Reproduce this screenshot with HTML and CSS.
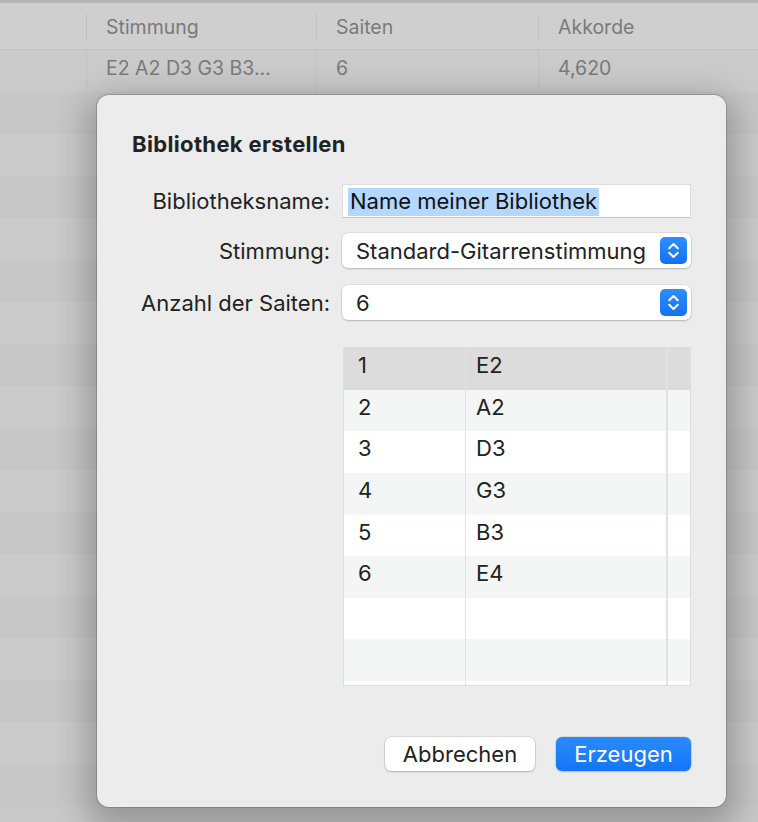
FILE: index.html
```html
<!DOCTYPE html>
<html lang="de">
<head>
<meta charset="utf-8">
<title>Bibliothek erstellen</title>
<link rel="stylesheet" href="styles.css">
</head>
<body>
<div class="window">
  <div class="list">
    <div class="list-head">
      <div class="cell c0"></div>
      <div class="cell c1">Stimmung</div>
      <div class="cell c2">Saiten</div>
      <div class="cell c3">Akkorde</div>
    </div>
    <div class="list-row">
      <div class="cell c0"></div>
      <div class="cell c1">E2 A2 D3 G3 B3...</div>
      <div class="cell c2">6</div>
      <div class="cell c3">4,620</div>
    </div>
    <div class="list-row"></div>
    <div class="list-row"></div>
    <div class="list-row"></div>
    <div class="list-row"></div>
    <div class="list-row"></div>
    <div class="list-row"></div>
    <div class="list-row"></div>
    <div class="list-row"></div>
    <div class="list-row"></div>
    <div class="list-row"></div>
    <div class="list-row"></div>
    <div class="list-row"></div>
    <div class="list-row"></div>
    <div class="list-row"></div>
    <div class="list-row"></div>
    <div class="list-row"></div>
    <div class="list-row"></div>
  </div>

  <div class="dialog">
    <h1 class="title">Bibliothek erstellen</h1>

    <div class="form-row row-name">
      <label class="label">Bibliotheksname:</label>
      <div class="field"><span class="selected">Name meiner Bibliothek</span></div>
    </div>

    <div class="form-row row-tuning">
      <label class="label">Stimmung:</label>
      <div class="popup">
        <span class="popup-text">Standard-Gitarrenstimmung</span>
        <span class="stepper">
          <svg width="27" height="27" viewBox="0 0 27 27" aria-hidden="true">
            <path d="M9.2 11.2 L13.5 7 L17.8 11.2" fill="none" stroke="#fff" stroke-width="2" stroke-linecap="round" stroke-linejoin="round"/>
            <path d="M9.2 15.8 L13.5 20 L17.8 15.8" fill="none" stroke="#fff" stroke-width="2" stroke-linecap="round" stroke-linejoin="round"/>
          </svg>
        </span>
      </div>
    </div>

    <div class="form-row row-strings">
      <label class="label">Anzahl der Saiten:</label>
      <div class="popup">
        <span class="popup-text">6</span>
        <span class="stepper">
          <svg width="27" height="27" viewBox="0 0 27 27" aria-hidden="true">
            <path d="M9.2 11.2 L13.5 7 L17.8 11.2" fill="none" stroke="#fff" stroke-width="2" stroke-linecap="round" stroke-linejoin="round"/>
            <path d="M9.2 15.8 L13.5 20 L17.8 15.8" fill="none" stroke="#fff" stroke-width="2" stroke-linecap="round" stroke-linejoin="round"/>
          </svg>
        </span>
      </div>
    </div>

    <div class="form-row row-table">
      <div class="label"></div>
      <div class="table">
        <div class="t-row sel"><div class="t-cell n">1</div><div class="t-cell note">E2</div><div class="t-cell extra"></div></div>
        <div class="t-row alt"><div class="t-cell n">2</div><div class="t-cell note">A2</div><div class="t-cell extra"></div></div>
        <div class="t-row"><div class="t-cell n">3</div><div class="t-cell note">D3</div><div class="t-cell extra"></div></div>
        <div class="t-row alt"><div class="t-cell n">4</div><div class="t-cell note">G3</div><div class="t-cell extra"></div></div>
        <div class="t-row"><div class="t-cell n">5</div><div class="t-cell note">B3</div><div class="t-cell extra"></div></div>
        <div class="t-row alt"><div class="t-cell n">6</div><div class="t-cell note">E4</div><div class="t-cell extra"></div></div>
        <div class="t-row"><div class="t-cell n"></div><div class="t-cell note"></div><div class="t-cell extra"></div></div>
        <div class="t-row alt"><div class="t-cell n"></div><div class="t-cell note"></div><div class="t-cell extra"></div></div>
        <div class="t-row tail"><div class="t-cell n"></div><div class="t-cell note"></div><div class="t-cell extra"></div></div>
      </div>
    </div>

    <div class="buttons">
      <button class="btn btn-cancel" type="button">Abbrechen</button>
      <button class="btn btn-default" type="button">Erzeugen</button>
    </div>
  </div>
</div>
</body>
</html>
```

FILE: styles.css
```css
* { box-sizing: border-box; }

html, body {
  margin: 0;
  padding: 0;
}

body {
  font-family: Inter, "Noto Sans", "DejaVu Sans", sans-serif;
  color: #222;
  background: #c9c9c9;
}

.window {
  position: relative;
  width: 758px;
  height: 822px;
  overflow: hidden;
  background: #c9c9c9;
  border-top: 3px solid #b4b4b4;
}

/* background list */
.list-head,
.list-row {
  display: grid;
  grid-template-columns: 86px 230px 222px 1fr;
  height: 42px;
}

.list-head {
  height: 47px;
  background: #cfcfcf;
  border-bottom: 1px solid #c2c2c2;
}

.list-row { background: #cbcbcb; }
.list-row:nth-child(odd) { background: #c7c7c7; }

.cell {
  font-size: 19.5px;
  color: #7a7a7a;
  padding-left: 19px;
  display: flex;
  align-items: center;
}

.list-head .cell { padding-top: 2px; }

.list-head .c1,
.list-head .c2,
.list-head .c3 {
  border-left: 1px solid #c2c2c2;
  margin: 10px 0 8px;
  padding-top: 0;
}

.list-row .c1,
.list-row .c2,
.list-row .c3 {
  border-left: 1px solid #c2c2c2;
  padding-bottom: 6px;
}

/* dialog sheet */
.dialog {
  position: absolute;
  left: 97px;
  top: 92px;
  width: 629px;
  height: 712px;
  background: #ececec;
  border-radius: 12px;
  padding: 36px 35px 35px;
  box-shadow:
    0 0 0 1px rgba(0, 0, 0, 0.16),
    0 12px 34px 10px rgba(0, 0, 0, 0.26);
}

.title {
  margin: 0 0 27px;
  font-size: 22px;
  line-height: 26px;
  font-weight: 700;
  letter-spacing: 0.35px;
  color: #222;
}

.form-row {
  display: flex;
  align-items: center;
  gap: 12px;
}

.label {
  width: 198px;
  flex: none;
  text-align: right;
  font-size: 22px;
  color: #222;
}

.row-name { height: 34px; }
.row-tuning { height: 35px; margin-top: 15px; }
.row-strings { height: 35px; margin-top: 17px; }
.row-table { margin-top: 27px; align-items: flex-start; }

.field {
  width: 349px;
  height: 34px;
  background: #fff;
  border: 1px solid #dcdcdc;
  border-bottom-color: #c6c6c6;
  padding: 1px 0 0 5px;
  display: flex;
  align-items: center;
  font-size: 22px;
}

.selected {
  background: #b3d7ff;
  color: #111;
  padding: 1px 2px 2px;
  line-height: 25px;
}

.popup {
  width: 350px;
  height: 35px;
  background: #fff;
  border-radius: 6px;
  box-shadow: 0 0 0 0.5px rgba(0, 0, 0, 0.12), 0 1px 2px rgba(0, 0, 0, 0.18);
  display: flex;
  align-items: center;
  justify-content: space-between;
  padding: 0 4px 0 14px;
  font-size: 22px;
  color: #222;
}

.stepper {
  width: 27px;
  height: 27px;
  border-radius: 5px;
  background: linear-gradient(#2d8efd, #1173f4);
  display: block;
}

.stepper svg { display: block; }

/* strings table */
.table {
  width: 349px;
  height: 339px;
  margin-left: 1px;
  border: 1px solid #dedede;
  background: #fff;
  overflow: hidden;
}

.t-row {
  display: grid;
  grid-template-columns: 121px 201px 1fr;
  height: 41.625px;
  background: #fff;
}

.t-row.alt { background: #f4f5f5; }
.t-row.sel { background: #dcdcdc; }
.t-row.tail { height: 10px; }

.t-cell {
  font-size: 22px;
  color: #222;
  line-height: 26px;
  padding-top: 4px;
}

.t-cell.n { padding-left: 14px; }
.t-cell.note {
  padding-left: 10px;
  border-left: 1px solid #e2e2e2;
}
.t-cell.extra {
  border-left: 2px solid #e2e2e2;
}

/* buttons */
.buttons {
  display: flex;
  justify-content: flex-end;
  gap: 21px;
  margin-top: 51px;
}

.btn {
  height: 34px;
  border: none;
  border-radius: 6px;
  font-family: Inter, "Noto Sans", sans-serif;
  font-size: 22px;
  padding: 0 10px;
  cursor: default;
}

.btn-cancel {
  width: 150px;
  background: #fff;
  color: #222;
  box-shadow: 0 0 0 0.5px rgba(0, 0, 0, 0.14), 0 1px 2px rgba(0, 0, 0, 0.2);
}

.btn-default {
  width: 135px;
  background: linear-gradient(#2a8bfd, #1375f5);
  color: #fff;
  box-shadow: 0 0 0 0.5px rgba(0, 60, 160, 0.2), 0 1px 2px rgba(0, 0, 0, 0.15);
}
```
